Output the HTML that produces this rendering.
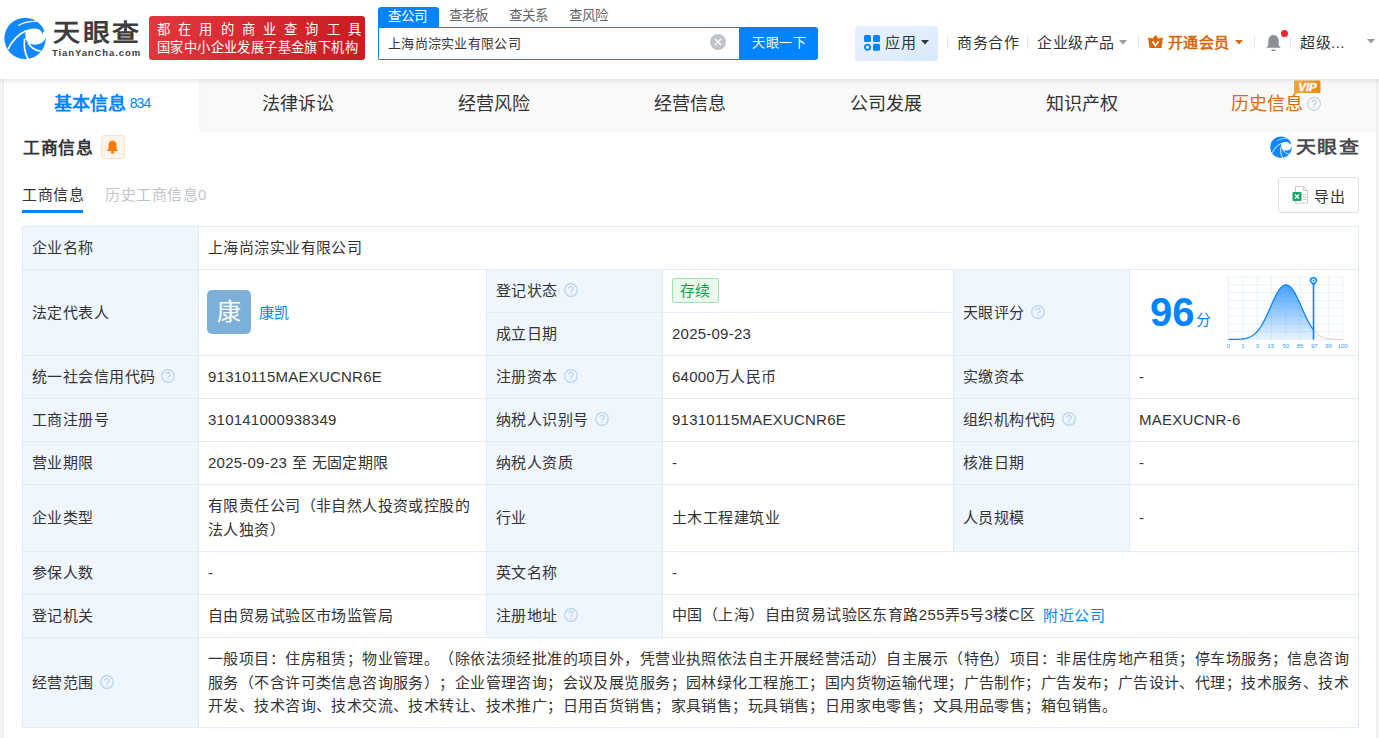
<!DOCTYPE html>
<html lang="zh-CN"><head><meta charset="utf-8">
<style>
*{margin:0;padding:0;box-sizing:border-box}
html,body{width:1379px;height:738px;overflow:hidden;text-spacing-trim:space-all;background:#f5f5f5;font-family:"Liberation Sans",sans-serif;color:#333}
.abs{position:absolute;white-space:nowrap}
#hdr{position:absolute;left:0;top:0;width:1379px;height:79px;background:#fff}
#card{position:absolute;left:4px;top:79px;width:1372px;height:659px;background:#fff}
#tabs{position:absolute;left:4px;top:79px;width:1372px;height:53px;background:#f9f9f9}
#shadow{position:absolute;left:0;top:79px;width:1379px;height:6px;background:linear-gradient(rgba(0,0,0,0.075),rgba(0,0,0,0))}
.tab{position:absolute;top:0;height:53px;width:196px;text-align:center;line-height:50px;font-size:18px;color:#333}
.c{position:absolute;border:1px solid #e1ecf7;display:flex;align-items:center;padding-left:9px;font-size:15px;letter-spacing:0.42px;text-spacing-trim:space-all;line-height:20px;color:#333;white-space:nowrap}
.l{background:#eff6fd}
.q{display:inline-block;position:relative;top:-2px;vertical-align:middle;margin-left:6px}
.av{display:inline-block;vertical-align:middle;position:relative;top:-1px;margin-left:-1px;width:44px;height:44px;border-radius:5px;background:#7db0d9;color:#fff;font-size:24px;line-height:44px;text-align:center;margin-right:8px}
.lk{color:#0084ff;vertical-align:middle}
.tag{display:inline-block;position:relative;top:-1px;height:25px;line-height:23px;padding:0 7px;border:1px solid #9ee0b5;background:#e9f9ee;color:#16a04a;border-radius:2px;font-size:15px}
.n{letter-spacing:0.23px}
.ml{line-height:24px;white-space:nowrap}
.ml2{line-height:23.5px;white-space:nowrap}
.sep{position:absolute;top:36px;width:1px;height:13px;background:#e6e6e6}
</style></head><body>
<div id="hdr">
  <svg class="abs" style="left:2px;top:15px" width="48" height="47" viewBox="0 0 754 738">
    <circle cx="362" cy="367" r="325" fill="#1288ff"/>
    <path d="M375 245 C450 205 560 200 612 250 C630 270 628 295 622 312 L652 262 L700 230 L760 230 L760 345 L688 345 C670 420 600 470 500 465 C450 462 420 450 410 440 C370 400 355 330 375 245 Z" fill="#fff"/>
    <path d="M385 245 C260 300 160 400 95 540" stroke="#fff" stroke-width="26" fill="none"/>
    <path d="M255 165 C330 120 440 95 545 100" stroke="#fff" stroke-width="18" fill="none"/>
    <path d="M355 370 C340 480 360 600 410 695" stroke="#fff" stroke-width="26" fill="none"/>
    <path d="M410 440 C460 520 530 560 610 570" stroke="#fff" stroke-width="24" fill="none"/>
  </svg>
  <div class="abs" style="left:53px;top:13px;font-size:27px;font-weight:bold;color:#3d3d3d;letter-spacing:2.6px;transform:scaleY(0.9);transform-origin:0 0">天眼查</div>
  <div class="abs" style="left:52px;top:47px;font-size:9.5px;font-weight:bold;color:#3d3d3d;letter-spacing:0.9px">TianYanCha.com</div>
  <div class="abs" style="left:149px;top:16px;width:216px;height:44px;border-radius:3px;background:linear-gradient(100deg,#e1383d,#c81c22)"></div>
  <div class="abs" style="left:157px;top:19px;font-size:13.3px;color:#fff;letter-spacing:8.2px">都在用的商业查询工具</div>
  <div class="abs" style="left:157px;top:37px;font-size:13.2px;color:#fff;letter-spacing:0.4px">国家中小企业发展子基金旗下机构</div>

  <div class="abs" style="left:378px;top:7px;width:61px;height:21px;background:#0084ff;border-radius:3px 3px 0 0"></div>
  <div class="abs" style="left:388px;top:5px;font-size:13.5px;color:#fff">查公司</div>
  <div class="abs" style="left:449px;top:4px;font-size:13.5px;color:#666">查老板</div>
  <div class="abs" style="left:509px;top:4px;font-size:13.5px;color:#666">查关系</div>
  <div class="abs" style="left:569px;top:4px;font-size:13.5px;color:#666">查风险</div>
  <div class="abs" style="left:378px;top:27px;width:362px;height:33px;border:1px solid #0084ff;border-right:none;border-radius:0 0 0 2px"></div>
  <div class="abs" style="left:388px;top:33px;font-size:13px;letter-spacing:0.3px;color:#333">上海尚淙实业有限公司</div>
  <div class="abs" style="left:710px;top:34px;width:16px;height:16px;border-radius:50%;background:#c0c3c9"></div>
  <svg class="abs" style="left:710px;top:34px" width="16" height="16"><path d="M5 5 L11 11 M11 5 L5 11" stroke="#fff" stroke-width="1.4"/></svg>
  <div class="abs" style="left:739px;top:27px;width:79px;height:33px;background:#0084ff;border-radius:0 3px 3px 0"></div>
  <div class="abs" style="left:752px;top:32px;font-size:13px;letter-spacing:0.5px;color:#fff">天眼一下</div>

  <div class="abs" style="left:855px;top:26px;width:83px;height:35px;border-radius:3px;background:linear-gradient(160deg,#e3efff 40%,#d8e8fb)"></div>
  <svg class="abs" style="left:864px;top:35px" width="17" height="16" viewBox="0 0 17 16">
    <rect x="0" y="0" width="7" height="7" rx="1.5" fill="#0084ff"/>
    <rect x="9" y="0" width="7" height="7" rx="1.5" fill="#0084ff"/>
    <circle cx="3.5" cy="12.2" r="2.6" fill="none" stroke="#0084ff" stroke-width="1.8"/>
    <rect x="9" y="8.7" width="7" height="7" rx="1.5" fill="#0084ff"/>
  </svg>
  <div class="abs" style="left:885px;top:31px;letter-spacing:0.5px;font-size:15px;color:#333">应用</div>
  <svg class="abs" style="left:921px;top:40px" width="8" height="5"><path d="M0 0 L8 0 L4 4.5 Z" fill="#333"/></svg>
  <div class="sep" style="left:947px"></div>
  <div class="abs" style="left:957px;top:31px;letter-spacing:0.5px;font-size:15px;color:#333">商务合作</div>
  <div class="sep" style="left:1027px"></div>
  <div class="abs" style="left:1037px;top:31px;letter-spacing:0.5px;font-size:15px;color:#333">企业级产品</div>
  <svg class="abs" style="left:1119px;top:40px" width="8" height="5"><path d="M0 0 L8 0 L4 4.5 Z" fill="#999"/></svg>
  <div class="sep" style="left:1138px"></div>
  <svg class="abs" style="left:1148px;top:35px" width="15" height="13" viewBox="0 0 15 13">
    <path d="M7.5 0 L10.5 3.5 L15 2.5 L13.5 13 L1.5 13 L0 2.5 L4.5 3.5 Z" fill="#d9690c"/>
    <path d="M4.5 6.5 L7.5 10.5 L10.5 6.5" stroke="#fff" stroke-width="1.8" fill="none"/>
  </svg>
  <div class="abs" style="left:1168px;top:31px;letter-spacing:0.4px;font-size:15px;font-weight:bold;color:#d9690c">开通会员</div>
  <svg class="abs" style="left:1235px;top:40px" width="8" height="5"><path d="M0 0 L8 0 L4 4.5 Z" fill="#d9690c"/></svg>
  <div class="sep" style="left:1254px"></div>
  <svg class="abs" style="left:1265px;top:34px" width="17" height="18" viewBox="0 0 17 18">
    <path d="M8.5 1 C5 1 3.3 3.8 3.3 7 L3.3 11.5 L1.2 13.8 L15.8 13.8 L13.7 11.5 L13.7 7 C13.7 3.8 12 1 8.5 1 Z" fill="#8c8f96"/>
    <rect x="6.5" y="15.5" width="4" height="1.5" fill="#8c8f96"/>
  </svg>
  <div class="abs" style="left:1281px;top:30px;width:7px;height:7px;border-radius:50%;background:#f5222d"></div>
  <div class="sep" style="left:1290px"></div>
  <div class="abs" style="left:1300px;top:31px;letter-spacing:0.5px;font-size:15px;color:#333">超级...</div>
  <svg class="abs" style="left:1367px;top:39px" width="8" height="5"><path d="M0 0 L8 0 L4 4.5 Z" fill="#999"/></svg>
</div>
<div id="card"></div>
<div class="abs" style="left:3px;top:79px;width:1px;height:659px;background:#ebebeb"></div><div class="abs" style="left:1376px;top:79px;width:1px;height:659px;background:#ebebeb"></div>
<div id="tabs">
  <div class="tab" style="left:0;background:#fff;color:#0084ff;font-weight:bold">基本信息 <span style="font-weight:normal;font-size:14px;letter-spacing:-1px;position:relative;top:-2px;margin-left:-1px">834</span></div>
  <div class="tab" style="left:196px">法律诉讼</div>
  <div class="abs" style="left:195px;top:0;width:2px;height:52px;background:linear-gradient(90deg,rgba(0,0,0,0.045),rgba(0,0,0,0))"></div>
  <div class="tab" style="left:392px">经营风险</div>
  <div class="tab" style="left:588px">经营信息</div>
  <div class="tab" style="left:784px">公司发展</div>
  <div class="tab" style="left:980px">知识产权</div>
  <div class="abs" style="left:1227px;top:0;font-size:18px;line-height:50px;color:#e0690b">历史信息</div>

</div>
<div class="abs" style="left:23px;top:135px;font-size:16.8px;letter-spacing:0.5px;font-weight:bold;color:#333">工商信息</div>
<div class="abs" style="left:101px;top:135px;width:24px;height:24px;border:1px solid #fde2c8;background:#fff4ea;border-radius:3px"></div>
<svg class="abs" style="left:106px;top:140px" width="13" height="14" viewBox="0 0 13 14">
  <path d="M6.5 0.5 C3.8 0.5 2.5 2.8 2.5 5 L2.5 9 L0.8 11 L12.2 11 L10.5 9 L10.5 5 C10.5 2.8 9.2 0.5 6.5 0.5 Z" fill="#ff7a00"/>
  <circle cx="6.5" cy="12.2" r="1.5" fill="#ff7a00"/>
</svg>
<div class="abs" style="left:22px;top:183px;font-size:15px;letter-spacing:0.5px;color:#333">工商信息</div>
<div class="abs" style="left:22px;top:210px;width:61px;height:3px;background:#0084ff"></div>
<div class="abs" style="left:105px;top:183px;font-size:15px;letter-spacing:0.5px;color:#bfc4cc">历史工商信息0</div>
<div class="abs" style="left:1278px;top:177px;width:81px;height:36px;border:1px solid #dde3ea;border-radius:3px"></div>
<div class="abs" style="left:1314px;top:185px;font-size:15px;letter-spacing:1px;color:#333">导出</div>
<div class="c l" style="left:22px;top:226px;width:177px;height:44px;"><div>企业名称</div></div>
<div class="c" style="left:198px;top:226px;width:1161px;height:44px;"><div>上海尚淙实业有限公司</div></div>
<div class="c l" style="left:22px;top:269px;width:177px;height:87px;"><div>法定代表人</div></div>
<div class="c" style="left:198px;top:269px;width:289px;height:87px;"><div><div class="av">康</div><span class="lk">康凯</span></div></div>
<div class="c l" style="left:486px;top:269px;width:177px;height:44px;"><div>登记状态<svg class="q" width="14" height="14" viewBox="0 0 14 14"><circle cx="7" cy="7" r="6.3" fill="none" stroke="#b6d2ec" stroke-width="1.2"/><path d="M4.9 5.5 A2.1 2.1 0 1 1 7.9 7.3 Q7 7.8 7 8.7" fill="none" stroke="#b6d2ec" stroke-width="1.2"/><circle cx="7" cy="10.5" r="0.8" fill="#b6d2ec"/></svg></div></div>
<div class="c" style="left:662px;top:269px;width:292px;height:44px;"><div><span class="tag">存续</span></div></div>
<div class="c l" style="left:486px;top:312px;width:177px;height:44px;"><div>成立日期</div></div>
<div class="c" style="left:662px;top:312px;width:292px;height:44px;"><div><span class="n">2025-09-23</span></div></div>
<div class="c l" style="left:953px;top:269px;width:177px;height:87px;"><div>天眼评分<svg class="q" width="14" height="14" viewBox="0 0 14 14"><circle cx="7" cy="7" r="6.3" fill="none" stroke="#b6d2ec" stroke-width="1.2"/><path d="M4.9 5.5 A2.1 2.1 0 1 1 7.9 7.3 Q7 7.8 7 8.7" fill="none" stroke="#b6d2ec" stroke-width="1.2"/><circle cx="7" cy="10.5" r="0.8" fill="#b6d2ec"/></svg></div></div>
<div class="c" style="left:1129px;top:269px;width:230px;height:87px;"><div></div></div>
<div class="c l" style="left:22px;top:355px;width:177px;height:44px;"><div>统一社会信用代码<svg class="q" width="14" height="14" viewBox="0 0 14 14"><circle cx="7" cy="7" r="6.3" fill="none" stroke="#b6d2ec" stroke-width="1.2"/><path d="M4.9 5.5 A2.1 2.1 0 1 1 7.9 7.3 Q7 7.8 7 8.7" fill="none" stroke="#b6d2ec" stroke-width="1.2"/><circle cx="7" cy="10.5" r="0.8" fill="#b6d2ec"/></svg></div></div>
<div class="c" style="left:198px;top:355px;width:289px;height:44px;"><div><span class="n">91310115MAEXUCNR6E</span></div></div>
<div class="c l" style="left:486px;top:355px;width:177px;height:44px;"><div>注册资本<svg class="q" width="14" height="14" viewBox="0 0 14 14"><circle cx="7" cy="7" r="6.3" fill="none" stroke="#b6d2ec" stroke-width="1.2"/><path d="M4.9 5.5 A2.1 2.1 0 1 1 7.9 7.3 Q7 7.8 7 8.7" fill="none" stroke="#b6d2ec" stroke-width="1.2"/><circle cx="7" cy="10.5" r="0.8" fill="#b6d2ec"/></svg></div></div>
<div class="c" style="left:662px;top:355px;width:292px;height:44px;"><div><span class="n">64000</span>万人民币</div></div>
<div class="c l" style="left:953px;top:355px;width:177px;height:44px;"><div>实缴资本</div></div>
<div class="c" style="left:1129px;top:355px;width:230px;height:44px;"><div>-</div></div>
<div class="c l" style="left:22px;top:398px;width:177px;height:44px;"><div>工商注册号</div></div>
<div class="c" style="left:198px;top:398px;width:289px;height:44px;"><div><span class="n">310141000938349</span></div></div>
<div class="c l" style="left:486px;top:398px;width:177px;height:44px;"><div>纳税人识别号<svg class="q" width="14" height="14" viewBox="0 0 14 14"><circle cx="7" cy="7" r="6.3" fill="none" stroke="#b6d2ec" stroke-width="1.2"/><path d="M4.9 5.5 A2.1 2.1 0 1 1 7.9 7.3 Q7 7.8 7 8.7" fill="none" stroke="#b6d2ec" stroke-width="1.2"/><circle cx="7" cy="10.5" r="0.8" fill="#b6d2ec"/></svg></div></div>
<div class="c" style="left:662px;top:398px;width:292px;height:44px;"><div><span class="n">91310115MAEXUCNR6E</span></div></div>
<div class="c l" style="left:953px;top:398px;width:177px;height:44px;"><div>组织机构代码<svg class="q" width="14" height="14" viewBox="0 0 14 14"><circle cx="7" cy="7" r="6.3" fill="none" stroke="#b6d2ec" stroke-width="1.2"/><path d="M4.9 5.5 A2.1 2.1 0 1 1 7.9 7.3 Q7 7.8 7 8.7" fill="none" stroke="#b6d2ec" stroke-width="1.2"/><circle cx="7" cy="10.5" r="0.8" fill="#b6d2ec"/></svg></div></div>
<div class="c" style="left:1129px;top:398px;width:230px;height:44px;"><div><span class="n">MAEXUCNR-6</span></div></div>
<div class="c l" style="left:22px;top:441px;width:177px;height:44px;"><div>营业期限</div></div>
<div class="c" style="left:198px;top:441px;width:289px;height:44px;"><div><span class="n">2025-09-23</span> 至 无固定期限</div></div>
<div class="c l" style="left:486px;top:441px;width:177px;height:44px;"><div>纳税人资质</div></div>
<div class="c" style="left:662px;top:441px;width:292px;height:44px;"><div>-</div></div>
<div class="c l" style="left:953px;top:441px;width:177px;height:44px;"><div>核准日期</div></div>
<div class="c" style="left:1129px;top:441px;width:230px;height:44px;"><div>-</div></div>
<div class="c l" style="left:22px;top:484px;width:177px;height:68px;"><div>企业类型</div></div>
<div class="c" style="left:198px;top:484px;width:289px;height:68px;"><div><div class="ml">有限责任公司（非自然人投资或控股的<br>法人独资）</div></div></div>
<div class="c l" style="left:486px;top:484px;width:177px;height:68px;"><div>行业</div></div>
<div class="c" style="left:662px;top:484px;width:292px;height:68px;"><div>土木工程建筑业</div></div>
<div class="c l" style="left:953px;top:484px;width:177px;height:68px;"><div>人员规模</div></div>
<div class="c" style="left:1129px;top:484px;width:230px;height:68px;"><div>-</div></div>
<div class="c l" style="left:22px;top:551px;width:177px;height:44px;"><div>参保人数</div></div>
<div class="c" style="left:198px;top:551px;width:289px;height:44px;"><div>-</div></div>
<div class="c l" style="left:486px;top:551px;width:177px;height:44px;"><div>英文名称</div></div>
<div class="c" style="left:662px;top:551px;width:697px;height:44px;"><div>-</div></div>
<div class="c l" style="left:22px;top:594px;width:177px;height:44px;"><div>登记机关</div></div>
<div class="c" style="left:198px;top:594px;width:289px;height:44px;"><div>自由贸易试验区市场监管局</div></div>
<div class="c l" style="left:486px;top:594px;width:177px;height:44px;"><div>注册地址<svg class="q" width="14" height="14" viewBox="0 0 14 14"><circle cx="7" cy="7" r="6.3" fill="none" stroke="#b6d2ec" stroke-width="1.2"/><path d="M4.9 5.5 A2.1 2.1 0 1 1 7.9 7.3 Q7 7.8 7 8.7" fill="none" stroke="#b6d2ec" stroke-width="1.2"/><circle cx="7" cy="10.5" r="0.8" fill="#b6d2ec"/></svg></div></div>
<div class="c" style="left:662px;top:594px;width:697px;height:44px;"><div>中国（上海）自由贸易试验区东育路255弄5号3楼C区<span class="lk" style="margin-left:8px;position:relative;top:-1px">附近公司</span></div></div>
<div class="c l" style="left:22px;top:637px;width:177px;height:91px;"><div>经营范围<svg class="q" width="14" height="14" viewBox="0 0 14 14"><circle cx="7" cy="7" r="6.3" fill="none" stroke="#b6d2ec" stroke-width="1.2"/><path d="M4.9 5.5 A2.1 2.1 0 1 1 7.9 7.3 Q7 7.8 7 8.7" fill="none" stroke="#b6d2ec" stroke-width="1.2"/><circle cx="7" cy="10.5" r="0.8" fill="#b6d2ec"/></svg></div></div>
<div class="c" style="left:198px;top:637px;width:1161px;height:91px;"><div><div class="ml2">一般项目：住房租赁；物业管理。（除依法须经批准的项目外，凭营业执照依法自主开展经营活动）自主展示（特色）项目：非居住房地产租赁；停车场服务；信息咨询<br>服务（不含许可类信息咨询服务）；企业管理咨询；会议及展览服务；园林绿化工程施工；国内货物运输代理；广告制作；广告发布；广告设计、代理；技术服务、技术<br>开发、技术咨询、技术交流、技术转让、技术推广；日用百货销售；家具销售；玩具销售；日用家电零售；文具用品零售；箱包销售。</div></div></div>

<svg class="abs" style="left:1269px;top:135px" width="25" height="24.5" viewBox="0 0 754 738">
    <circle cx="362" cy="367" r="325" fill="#1288ff"/>
    <path d="M375 245 C450 205 560 200 612 250 C630 270 628 295 622 312 L652 262 L700 230 L760 230 L760 345 L688 345 C670 420 600 470 500 465 C450 462 420 450 410 440 C370 400 355 330 375 245 Z" fill="#fff"/>
    <path d="M385 245 C260 300 160 400 95 540" stroke="#fff" stroke-width="26" fill="none"/>
    <path d="M255 165 C330 120 440 95 545 100" stroke="#fff" stroke-width="18" fill="none"/>
    <path d="M355 370 C340 480 360 600 410 695" stroke="#fff" stroke-width="26" fill="none"/>
    <path d="M410 440 C460 520 530 560 610 570" stroke="#fff" stroke-width="24" fill="none"/>
  </svg>
<div class="abs" style="left:1296px;top:133px;font-size:20px;font-weight:bold;color:#4a4a50;letter-spacing:1.3px;transform:scaleY(0.88);transform-origin:0 0">天眼查</div>

<div id="shadow"></div>
<svg class="abs" style="left:1225px;top:272px" width="126" height="80" viewBox="0 0 126 80">
  <defs><linearGradient id="cg" x1="0" y1="0" x2="0" y2="1"><stop offset="0" stop-color="#3d9bff" stop-opacity="0.95"/><stop offset="1" stop-color="#3d9bff" stop-opacity="0.1"/></linearGradient></defs>
  <g stroke="#e9f1fb" stroke-width="1"><line x1="3.40" y1="5.0" x2="3.40" y2="67.5"/><line x1="17.74" y1="5.0" x2="17.74" y2="67.5"/><line x1="32.07" y1="5.0" x2="32.07" y2="67.5"/><line x1="46.41" y1="5.0" x2="46.41" y2="67.5"/><line x1="60.75" y1="5.0" x2="60.75" y2="67.5"/><line x1="75.09" y1="5.0" x2="75.09" y2="67.5"/><line x1="89.42" y1="5.0" x2="89.42" y2="67.5"/><line x1="103.76" y1="5.0" x2="103.76" y2="67.5"/><line x1="118.10" y1="5.0" x2="118.10" y2="67.5"/><line x1="3.4" y1="5.00" x2="118.1" y2="5.00"/><line x1="3.4" y1="12.81" x2="118.1" y2="12.81"/><line x1="3.4" y1="20.62" x2="118.1" y2="20.62"/><line x1="3.4" y1="28.44" x2="118.1" y2="28.44"/><line x1="3.4" y1="36.25" x2="118.1" y2="36.25"/><line x1="3.4" y1="44.06" x2="118.1" y2="44.06"/><line x1="3.4" y1="51.88" x2="118.1" y2="51.88"/><line x1="3.4" y1="59.69" x2="118.1" y2="59.69"/><line x1="3.4" y1="67.50" x2="118.1" y2="67.50"/></g>
  <path d="M3.40 67.49 L3.90 67.48 L4.40 67.48 L4.90 67.48 L5.40 67.47 L5.90 67.47 L6.40 67.46 L6.90 67.46 L7.40 67.45 L7.90 67.45 L8.40 67.44 L8.90 67.43 L9.40 67.42 L9.90 67.41 L10.40 67.39 L10.90 67.38 L11.40 67.36 L11.90 67.35 L12.40 67.33 L12.90 67.30 L13.40 67.28 L13.90 67.25 L14.40 67.22 L14.90 67.18 L15.40 67.14 L15.90 67.10 L16.40 67.05 L16.90 67.00 L17.40 66.94 L17.90 66.87 L18.40 66.80 L18.90 66.72 L19.40 66.63 L19.90 66.54 L20.40 66.44 L20.90 66.32 L21.40 66.20 L21.90 66.06 L22.40 65.92 L22.90 65.76 L23.40 65.59 L23.90 65.40 L24.40 65.20 L24.90 64.98 L25.40 64.75 L25.90 64.50 L26.40 64.23 L26.90 63.94 L27.40 63.63 L27.90 63.30 L28.40 62.95 L28.90 62.57 L29.40 62.17 L29.90 61.75 L30.40 61.30 L30.90 60.82 L31.40 60.32 L31.90 59.79 L32.40 59.23 L32.90 58.64 L33.40 58.03 L33.90 57.38 L34.40 56.71 L34.90 56.00 L35.40 55.27 L35.90 54.50 L36.40 53.71 L36.90 52.89 L37.40 52.03 L37.90 51.15 L38.40 50.24 L38.90 49.31 L39.40 48.35 L39.90 47.36 L40.40 46.35 L40.90 45.32 L41.40 44.27 L41.90 43.20 L42.40 42.11 L42.90 41.01 L43.40 39.90 L43.90 38.77 L44.40 37.64 L44.90 36.50 L45.40 35.36 L45.90 34.22 L46.40 33.08 L46.90 31.94 L47.40 30.82 L47.90 29.70 L48.40 28.60 L48.90 27.52 L49.40 26.45 L49.90 25.41 L50.40 24.39 L50.90 23.41 L51.40 22.45 L51.90 21.53 L52.40 20.65 L52.90 19.80 L53.40 19.00 L53.90 18.24 L54.40 17.53 L54.90 16.86 L55.40 16.25 L55.90 15.68 L56.40 15.17 L56.90 14.71 L57.40 14.31 L57.90 13.96 L58.40 13.66 L58.90 13.43 L59.40 13.24 L59.90 13.11 L60.40 13.03 L60.90 13.00 L61.40 13.01 L61.90 13.07 L62.40 13.18 L62.90 13.34 L63.40 13.56 L63.90 13.83 L64.40 14.16 L64.90 14.54 L65.40 14.98 L65.90 15.47 L66.40 16.01 L66.90 16.61 L67.40 17.26 L67.90 17.95 L68.40 18.69 L68.90 19.48 L69.40 20.30 L69.90 21.17 L70.40 22.08 L70.90 23.02 L71.40 24.00 L71.90 25.00 L72.40 26.03 L72.90 27.09 L73.40 28.16 L73.90 29.26 L74.40 30.37 L74.90 31.49 L75.40 32.62 L75.90 33.76 L76.40 34.90 L76.90 36.04 L77.40 37.18 L77.90 38.32 L78.40 39.45 L78.90 40.57 L79.40 41.67 L79.90 42.77 L80.40 43.84 L80.90 44.90 L81.40 45.94 L81.90 46.96 L82.40 47.96 L82.90 48.93 L83.40 49.87 L83.90 50.79 L84.40 51.68 L84.90 52.55 L85.40 53.38 L85.90 54.19 L86.40 54.97 L86.90 55.71 L87.40 56.43 L87.90 57.12 L88.40 57.77 L88.50 57.90 L88.5 67.5 L3.4 67.5 Z" fill="url(#cg)"/>
  <path d="M3.40 67.49 L3.90 67.48 L4.40 67.48 L4.90 67.48 L5.40 67.47 L5.90 67.47 L6.40 67.46 L6.90 67.46 L7.40 67.45 L7.90 67.45 L8.40 67.44 L8.90 67.43 L9.40 67.42 L9.90 67.41 L10.40 67.39 L10.90 67.38 L11.40 67.36 L11.90 67.35 L12.40 67.33 L12.90 67.30 L13.40 67.28 L13.90 67.25 L14.40 67.22 L14.90 67.18 L15.40 67.14 L15.90 67.10 L16.40 67.05 L16.90 67.00 L17.40 66.94 L17.90 66.87 L18.40 66.80 L18.90 66.72 L19.40 66.63 L19.90 66.54 L20.40 66.44 L20.90 66.32 L21.40 66.20 L21.90 66.06 L22.40 65.92 L22.90 65.76 L23.40 65.59 L23.90 65.40 L24.40 65.20 L24.90 64.98 L25.40 64.75 L25.90 64.50 L26.40 64.23 L26.90 63.94 L27.40 63.63 L27.90 63.30 L28.40 62.95 L28.90 62.57 L29.40 62.17 L29.90 61.75 L30.40 61.30 L30.90 60.82 L31.40 60.32 L31.90 59.79 L32.40 59.23 L32.90 58.64 L33.40 58.03 L33.90 57.38 L34.40 56.71 L34.90 56.00 L35.40 55.27 L35.90 54.50 L36.40 53.71 L36.90 52.89 L37.40 52.03 L37.90 51.15 L38.40 50.24 L38.90 49.31 L39.40 48.35 L39.90 47.36 L40.40 46.35 L40.90 45.32 L41.40 44.27 L41.90 43.20 L42.40 42.11 L42.90 41.01 L43.40 39.90 L43.90 38.77 L44.40 37.64 L44.90 36.50 L45.40 35.36 L45.90 34.22 L46.40 33.08 L46.90 31.94 L47.40 30.82 L47.90 29.70 L48.40 28.60 L48.90 27.52 L49.40 26.45 L49.90 25.41 L50.40 24.39 L50.90 23.41 L51.40 22.45 L51.90 21.53 L52.40 20.65 L52.90 19.80 L53.40 19.00 L53.90 18.24 L54.40 17.53 L54.90 16.86 L55.40 16.25 L55.90 15.68 L56.40 15.17 L56.90 14.71 L57.40 14.31 L57.90 13.96 L58.40 13.66 L58.90 13.43 L59.40 13.24 L59.90 13.11 L60.40 13.03 L60.90 13.00 L61.40 13.01 L61.90 13.07 L62.40 13.18 L62.90 13.34 L63.40 13.56 L63.90 13.83 L64.40 14.16 L64.90 14.54 L65.40 14.98 L65.90 15.47 L66.40 16.01 L66.90 16.61 L67.40 17.26 L67.90 17.95 L68.40 18.69 L68.90 19.48 L69.40 20.30 L69.90 21.17 L70.40 22.08 L70.90 23.02 L71.40 24.00 L71.90 25.00 L72.40 26.03 L72.90 27.09 L73.40 28.16 L73.90 29.26 L74.40 30.37 L74.90 31.49 L75.40 32.62 L75.90 33.76 L76.40 34.90 L76.90 36.04 L77.40 37.18 L77.90 38.32 L78.40 39.45 L78.90 40.57 L79.40 41.67 L79.90 42.77 L80.40 43.84 L80.90 44.90 L81.40 45.94 L81.90 46.96 L82.40 47.96 L82.90 48.93 L83.40 49.87 L83.90 50.79 L84.40 51.68 L84.90 52.55 L85.40 53.38 L85.90 54.19 L86.40 54.97 L86.90 55.71 L87.40 56.43 L87.90 57.12 L88.40 57.77 L88.50 57.90" fill="none" stroke="#0a84ff" stroke-width="1.3"/>
  <path d="M88.50 57.90 L88.90 58.40 L89.40 59.00 L89.90 59.57 L90.40 60.11 L90.90 60.62 L91.40 61.11 L91.90 61.57 L92.40 62.00 L92.90 62.41 L93.40 62.80 L93.90 63.16 L94.40 63.50 L94.90 63.82 L95.40 64.12 L95.90 64.39 L96.40 64.65 L96.90 64.89 L97.40 65.12 L97.90 65.32 L98.40 65.51 L98.90 65.69 L99.40 65.86 L99.90 66.01 L100.40 66.15 L100.90 66.27 L101.40 66.39 L101.90 66.50 L102.40 66.60 L102.90 66.69 L103.40 66.77 L103.90 66.84 L104.40 66.91 L104.90 66.97 L105.40 67.03 L105.90 67.08 L106.40 67.12 L106.90 67.17 L107.40 67.20 L107.90 67.24 L108.40 67.27 L108.90 67.29 L109.40 67.32 L109.90 67.34 L110.40 67.36 L110.90 67.37 L111.40 67.39 L111.90 67.40 L112.40 67.41 L112.90 67.43 L113.40 67.43 L113.90 67.44 L114.40 67.45 L114.90 67.46 L115.40 67.46 L115.90 67.47 L116.40 67.47 L116.90 67.48 L117.40 67.48 L117.90 67.48" fill="none" stroke="#c9cdd3" stroke-width="1"/>
  <line x1="88.5" y1="10" x2="88.5" y2="67.5" stroke="#0a84ff" stroke-width="1.6"/>
  <path d="M84.7 8.8 A3.8 3.8 0 1 1 92.3 8.8 Q91.8 11 88.5 13.5 Q85.2 11 84.7 8.8 Z" fill="#0a84ff"/>
  <circle cx="88.5" cy="8.6" r="2.1" fill="#fff"/><circle cx="88.5" cy="8.6" r="1" fill="#0a84ff"/>
  <g font-family="Liberation Sans" font-size="6" fill="#3d9bff"><text x="3.4" y="75.9" text-anchor="middle">0</text><text x="17.9" y="75.9" text-anchor="middle">1</text><text x="32.3" y="75.9" text-anchor="middle">3</text><text x="45.9" y="75.9" text-anchor="middle">15</text><text x="60.9" y="75.9" text-anchor="middle">50</text><text x="75.1" y="75.9" text-anchor="middle">85</text><text x="89.3" y="75.9" text-anchor="middle">97</text><text x="103.5" y="75.9" text-anchor="middle">99</text><text x="117.6" y="75.9" text-anchor="middle">100</text></g>
</svg>
<div class="abs" style="left:1150px;top:289px;font-size:40px;font-weight:bold;color:#0084ff;line-height:46px">96</div>
<div class="abs" style="left:1196px;top:308px;font-size:15px;color:#0084ff">分</div>


<svg class="abs" style="left:1289px;top:78px" width="40" height="40" viewBox="0 0 40 40">
  <defs><linearGradient id="vg" x1="0" y1="0" x2="1" y2="0"><stop offset="0" stop-color="#f4a43a"/><stop offset="1" stop-color="#e88a12"/></linearGradient></defs>
  <path d="M5 3.5 Q5 2.5 6 2.5 L30.5 2.5 Q31.5 2.5 31.5 3.5 L31.5 14 Q31.5 15 30.5 15 L8.5 15 L4.5 18.5 L5 14 Z" fill="url(#vg)"/>
  <text x="18.5" y="13" text-anchor="middle" font-family="Liberation Sans" font-weight="bold" font-style="italic" font-size="11.5" fill="#fff" stroke="#fff" stroke-width="0.4">VIP</text>
  <circle cx="25" cy="25.8" r="6.4" fill="none" stroke="#c8d2de" stroke-width="1.2"/>
  <path d="M22.9 24.3 A2.1 2.1 0 1 1 25.9 26.1 Q25 26.6 25 27.5" fill="none" stroke="#c3cad4" stroke-width="1.2"/><circle cx="25" cy="29.3" r="0.8" fill="#c3cad4"/>
</svg>
<svg class="abs" style="left:1292px;top:186px" width="17" height="18" viewBox="0 0 17 18">
  <path d="M3.5 0.5 L11.5 0.5 L15.5 4.5 L15.5 17 L3.5 17 Z" fill="#fff" stroke="#c8ccd2" stroke-width="1"/>
  <path d="M11.5 0.5 L11.5 4.5 L15.5 4.5" fill="none" stroke="#c8ccd2" stroke-width="1"/>
  <rect x="11" y="8" width="3" height="1" fill="#c8ccd2"/><rect x="11" y="10.5" width="3" height="1" fill="#c8ccd2"/><rect x="11" y="13" width="3" height="1" fill="#c8ccd2"/>
  <rect x="0.5" y="6" width="9" height="9" rx="1" fill="#21a366"/>
  <path d="M3 8.5 L7 12.5 M7 8.5 L3 12.5" stroke="#fff" stroke-width="1.3"/>
</svg>

</body></html>
